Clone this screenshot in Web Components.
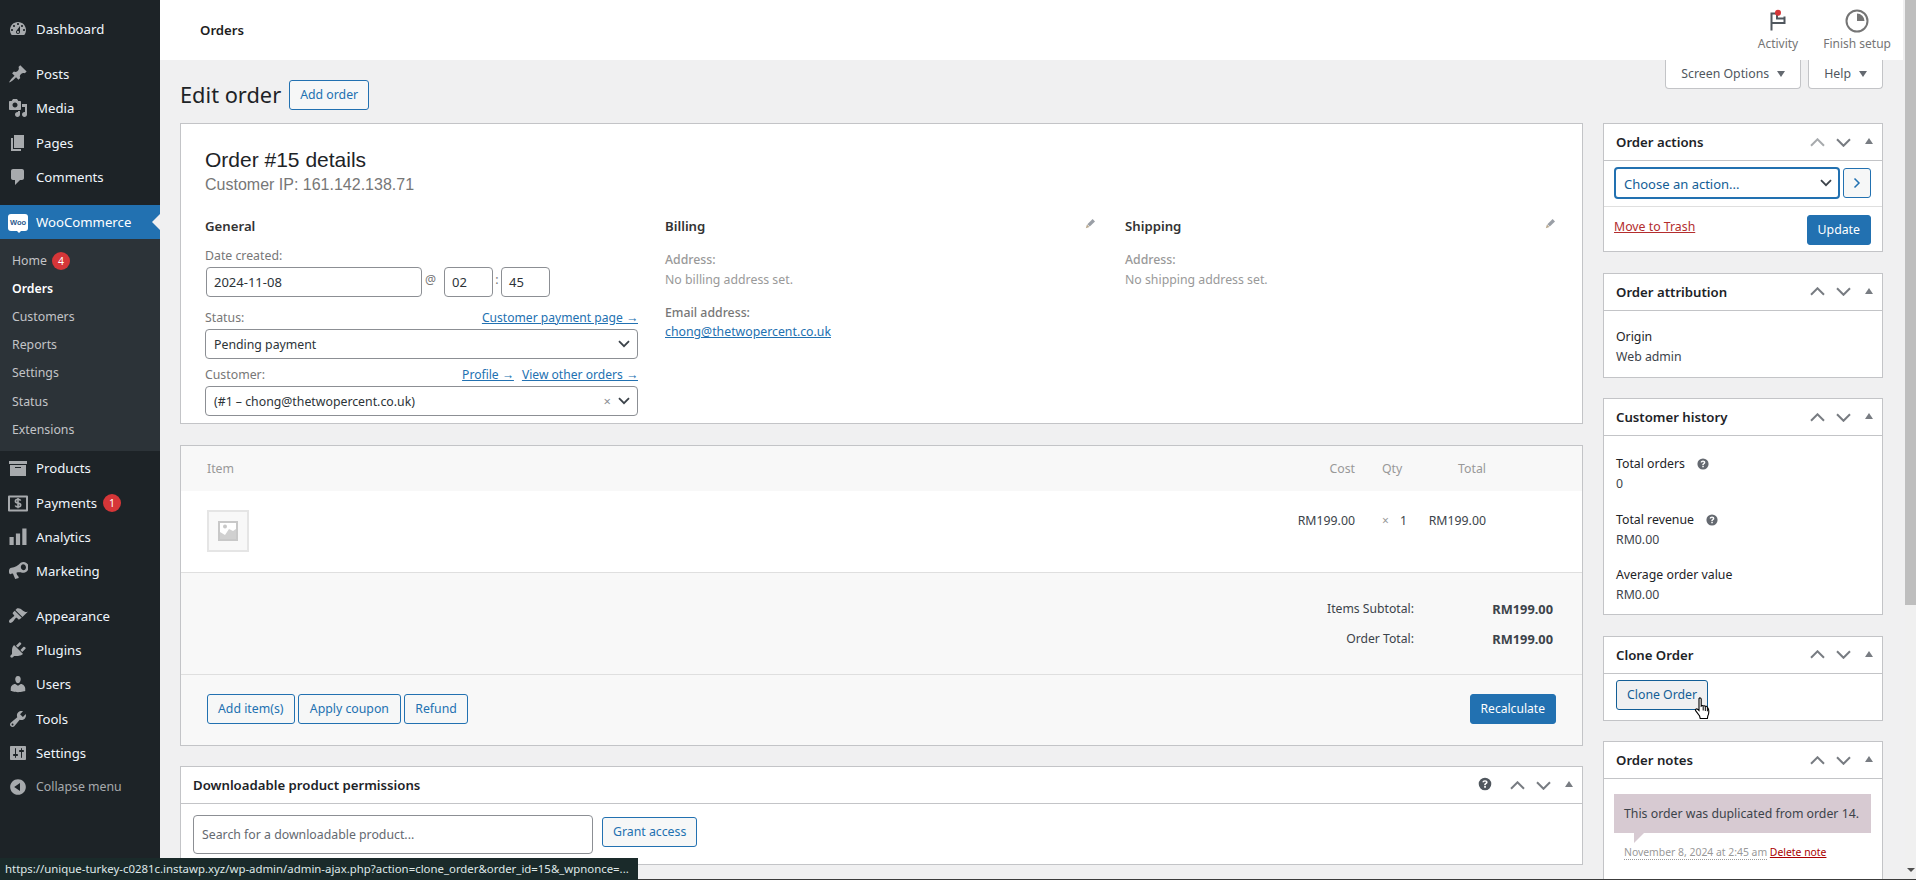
<!DOCTYPE html>
<html lang="en"><head><meta charset="utf-8"><title>Edit order</title>
<style>
html,body{margin:0;padding:0;height:880px;overflow:hidden;background:#f0f0f1}
body{font-family:"Noto Sans","Open Sans",sans-serif;font-size:12.3px;color:#3c434a;line-height:20px;position:relative}
wp-shell{display:flex;width:1916px;height:880px}
</style></head><body>
<wp-shell>
  <wp-menu></wp-menu>
  <wp-main>
    <wc-header slot="header"></wc-header>
    <title-row></title-row>
    <wp-columns>
      <div slot="main">
        <order-data></order-data>
        <order-items></order-items>
        <meta-box heading="Downloadable product permissions" help>
          <download-form></download-form>
        </meta-box>
      </div>
      <div slot="side">
        <meta-box heading="Order actions" dim-up><order-actions></order-actions></meta-box>
        <meta-box heading="Order attribution"><order-attribution></order-attribution></meta-box>
        <meta-box heading="Customer history"><customer-history></customer-history></meta-box>
        <meta-box heading="Clone Order"><clone-order></clone-order></meta-box>
        <meta-box heading="Order notes"><order-notes></order-notes></meta-box>
      </div>
    </wp-columns>
  </wp-main>
  <fake-scrollbar></fake-scrollbar>
</wp-shell>
<status-bubble></status-bubble>
<script>
const ICONS={
dashboard:'<path fill-rule="evenodd" d="M3.76 16h12.48c1.1-1.37 1.76-3.11 1.76-5 0-4.42-3.58-8-8-8s-8 3.58-8 8c0 1.89.66 3.63 1.76 5zM10 4c.55 0 1 .45 1 1s-.45 1-1 1-1-.45-1-1 .45-1 1-1zM6 6c.55 0 1 .45 1 1s-.45 1-1 1-1-.45-1-1 .45-1 1-1zm8 0c.55 0 1 .45 1 1s-.45 1-1 1-1-.45-1-1 .45-1 1-1zm-5.37 5.55L12 7v6c0 1.1-.9 2-2 2s-2-.9-2-2c0-.57.24-1.08.63-1.45zM4 10c.55 0 1 .45 1 1s-.45 1-1 1-1-.45-1-1 .45-1 1-1zm12 0c.55 0 1 .45 1 1s-.45 1-1 1-1-.45-1-1 .45-1 1-1zm-5 3c0-.55-.45-1-1-1s-1 .45-1 1 .45 1 1 1 1-.45 1-1z"/>',
post:'<path d="M10.44 3.02l1.82-1.82 6.36 6.35-1.83 1.82c-1.05-.68-2.48-.57-3.41.36l-.75.75c-.92.93-1.04 2.35-.35 3.41l-1.83 1.82-2.41-2.41-2.8 2.79c-.42.42-3.38 2.71-3.8 2.29s1.86-3.39 2.28-3.81l2.79-2.79L4.1 9.36l1.83-1.82c1.05.69 2.48.57 3.4-.36l.75-.75c.93-.92 1.05-2.35.36-3.41z"/>',
media:'<path fill-rule="evenodd" d="M13 11V4c0-.55-.45-1-1-1h-1.67L9 1H5L3.67 3H2c-.55 0-1 .45-1 1v7c0 .55.45 1 1 1h10c.55 0 1-.45 1-1zM7 4.5c1.38 0 2.5 1.12 2.5 2.5S8.38 9.5 7 9.5 4.5 8.38 4.5 7 5.62 4.5 7 4.5zM14 6h5v10.5c0 1.38-1.12 2.5-2.5 2.5S14 17.88 14 16.5s1.12-2.5 2.5-2.5c.17 0 .34.02.5.05V9h-3V6zm-4 8.05V13h2v3.5c0 1.38-1.12 2.5-2.5 2.5S7 17.88 7 16.5 8.12 14 9.5 14c.17 0 .34.02.5.05z"/>',
page:'<path d="M6 15V2h10v13H6zm-1 1h8v2H3V5h2v11z"/>',
comments:'<path d="M5 2h9c1.1 0 2 .9 2 2v7c0 1.1-.9 2-2 2h-2l-5 5v-5H5c-1.1 0-2-.9-2-2V4c0-1.1.9-2 2-2z"/>',
products:'<path fill-rule="evenodd" d="M19 3v3H1V3h18zM2 7h16v11H2V7zm11 3V9H7v1h6z"/>',
payments:'<path fill-rule="evenodd" d="M1 2.5h18a1 1 0 0 1 1 1v14a1 1 0 0 1-1 1H1a1 1 0 0 1-1-1v-14a1 1 0 0 1 1-1zm1 2v12h16v-12H2z"/><path fill="none" stroke="currentColor" stroke-width="1.6" d="M12.6 7.6c-.3-.8-1.2-1.3-2.6-1.3-1.5 0-2.6.7-2.6 1.9 0 2.6 5.3 1.2 5.3 3.8 0 1.2-1.2 1.9-2.7 1.9-1.4 0-2.4-.6-2.7-1.5M10 4.9v10.3"/>',
analytics:'<path d="M1.5 10h4.2v8H1.5zM7.9 6.5h4.2V18H7.9zM14.3 1.5h4.2V18h-4.2z"/>',
marketing:'<path fill-rule="evenodd" d="M12.7 1.8a5.3 5.3 0 1 1 4.3 9.6c-1 .4-2 .5-3 .3-1.8-.5-3.8-.5-5.6 0l.7 2.2c.2.5.7.8 1.100 1l.6 2.100-3.600 1.100-2.300-5.500-1.700.2C2.100 13.900 1 12.500 1 11V9.800C1 8.200 2 7 3.500 6.800c3.400-.5 6.400-2 9.200-5zM14.500 3.400c-1.300.4-2 2-1.500 3.600s2 2.500 3.300 2.100 2-2 1.500-3.600-2-2.500-3.300-2.100z"/>',
appearance:'<path d="M14.48 11.06L7.41 3.99l1.5-1.5c.5-.56 2.3-.47 3.51.32 1.21.8 1.43 1.28 2.91 2.1 1.18.64 2.45 1.26 4.45.85zm-.71.71L6.7 4.7 4.93 6.47c-.39.39-.39 1.02 0 1.41l1.06 1.06c.39.39.39 1.03 0 1.42-.6.6-1.43 1.11-2.21 1.69-.35.26-.7.53-1.01.84C1.43 13.23.5 15.1 1.24 16.33c.73 1.23 2.61.3 3.95-1.03.31-.31.58-.66.84-1.01.58-.78 1.09-1.61 1.69-2.21.39-.39 1.03-.39 1.42 0l1.06 1.06c.39.39 1.02.39 1.41 0z"/>',
plugins:'<path d="M13.11 4.36L9.87 7.6 8 5.73l3.24-3.24c.35-.34 1.05-.2 1.56.32.52.51.66 1.21.31 1.55zm-8 1.77l.91-1.12 9.01 9.01-1.19.84c-.71.71-2.63 1.16-3.82 1.16H6.14L4.9 17.26c-.59.59-1.54.59-2.12 0-.59-.58-.59-1.53 0-2.12l1.24-1.24v-3.88c0-1.13.4-3.19 1.09-3.89zm7.26 3.97l3.24-3.24c.34-.35 1.04-.21 1.55.31.52.51.66 1.21.31 1.55l-3.24 3.25z"/>',
users:'<path d="M10 9.25c-2.27 0-2.73-3.44-2.73-3.44C7 4.02 7.82 2 9.97 2c2.16 0 2.98 2.02 2.71 3.81 0 0-.41 3.44-2.68 3.44zm0 2.57L12.72 10c2.39 0 4.52 2.33 4.52 4.53v2.49s-3.65 1.13-7.24 1.13c-3.65 0-7.24-1.13-7.24-1.13v-2.49c0-2.25 1.94-4.48 4.47-4.48z"/>',
tools:'<path fill-rule="evenodd" d="M16.68 9.77c-1.34 1.34-3.3 1.67-4.95.99l-5.41 6.52c-.99.99-2.59.99-3.58 0s-.99-2.59 0-3.57l6.52-5.42c-.68-1.65-.35-3.61.99-4.95 1.28-1.28 3.12-1.62 4.72-1.06l-2.89 2.89 2.82 2.82 2.86-2.87c.53 1.58.18 3.39-1.08 4.65zM3.81 16.21c.4.39 1.04.39 1.43 0 .4-.4.4-1.04 0-1.43-.39-.4-1.03-.4-1.43 0-.39.39-.39 1.03 0 1.43z"/>',
settings:'<path fill-rule="evenodd" d="M18 16V4c0-.55-.45-1-1-1H3c-.55 0-1 .45-1 1v12c0 .55.45 1 1 1h14c.55 0 1-.45 1-1zM8 11h1c.55 0 1 .45 1 1s-.45 1-1 1H8v1.500c0 .28-.22.5-.5.5s-.5-.22-.5-.5V13H6c-.55 0-1-.45-1-1s.45-1 1-1h1V5.500c0-.28.22-.5.5-.5s.5.22.5.5V11zm5-2h-1c-.55 0-1-.45-1-1s.45-1 1-1h1V5.500c0-.28.22-.5.5-.5s.5.22.5.5V7h1c.55 0 1 .45 1 1s-.45 1-1 1h-1v5.500c0 .28-.22.5-.5.5s-.5-.22-.5-.5V9z"/>',
collapse:'<path fill-rule="evenodd" d="M10 2.160c4.330 0 7.840 3.510 7.840 7.840s-3.510 7.840-7.840 7.840S2.160 14.330 2.160 10 5.710 2.160 10 2.160zm2 11.720V6.120L6.180 9.970z"/>',
help:'<path fill-rule="evenodd" d="M10 3a7 7 0 1 1 0 14 7 7 0 0 1 0-14zm-.9 9.300v1.900h1.900v-1.900H9.100zM10 5.700c-1.600 0-2.800.9-2.900 2.400h1.800c.1-.6.500-.9 1.100-.9s1 .3 1 .9c0 .5-.3.800-.9 1.200-.8.500-1 1-1 2.100h1.800c0-.6.100-.9.800-1.300.8-.5 1.200-1.100 1.200-2 0-1.500-1.200-2.400-2.900-2.400z"/>'
};
class Base extends HTMLElement{
  connectedCallback(){
    if(this.shadowRoot)return;
    const r=this.attachShadow({mode:'open'});
    r.innerHTML='<style>'+this.constructor.css+'</style>'+this.html();
  }
  html(){return '<slot></slot>'}
}
const ico=(n,s=20)=>`<svg width="${s}" height="${s}" viewBox="0 0 20 20" fill="currentColor" aria-hidden="true">${ICONS[n]}</svg>`;
const chev=(c='#3c434a')=>`<svg width="12" height="8" viewBox="0 0 12 8" aria-hidden="true"><path d="M1 1.200l5 5 5-5" fill="none" stroke="${c}" stroke-width="1.800"/></svg>`;
const pencil=`<svg width="14" height="14" viewBox="0 0 14 14" aria-hidden="true"><path d="M4.600 9.400l5.200-5.200" stroke="#9a9fa6" stroke-width="3.400" fill="none"/><path d="M1.800 12.200l1.200-3.600 2.400 2.400z" fill="#b9a98f"/></svg>`;

class WpShell extends Base{static css=':host{display:flex}'}
class WpMenu extends Base{
  static css=`:host{display:block;width:160px;flex:none;background:#1d2327;height:880px;padding-top:11.6px;box-sizing:border-box;color:#f0f6fc;font-size:13.2px}
  .i{display:flex;align-items:center;height:34.33px;padding-left:8px;gap:8px;position:relative}
  .i svg{color:#a7aaad;flex:none}
  .sep{height:11px}
  .sep.s2{height:10px}
  .cur{background:#2271b1;height:34px;color:#fff}
  .cur:after{content:"";position:absolute;right:0;top:9px;border:8px solid transparent;border-right-color:#f0f0f1;border-left:0}
  .woo{width:20px;height:17px;background:#fff;border-radius:3px;color:#2c5a8c;font:700 7.500px/17px "Liberation Sans",sans-serif;text-align:center;position:relative;flex:none}
  .woo:after{content:"";position:absolute;left:9px;bottom:-2px;border:2px solid transparent;border-top-color:#fff;border-bottom:0}
  .sub{background:#2c3338;padding:7.600px 0 7.400px;font-size:12.3px}
  .sub div{height:28.17px;line-height:28.17px;padding-left:12px;color:#c3c4c7;display:flex;align-items:center;gap:5px}
  .sub .on{color:#fff;font-weight:600}
  .b{display:inline-block;width:18px;height:18px;border-radius:50%;background:#d63638;color:#fff;font-size:10.500px;line-height:18px;text-align:center}
  .muted{color:#a7aaad;font-size:12.3px}`;
  html(){
    const it=(n,t,x='')=>`<div class="i">${ico(n)}<span>${t}</span>${x}</div>`;
    return it('dashboard','Dashboard')+'<div class="sep"></div>'+it('post','Posts')+it('media','Media')+it('page','Pages')+it('comments','Comments')+'<div class="sep"></div>'
    +'<div class="i cur"><span class="woo">Woo</span><span>WooCommerce</span></div>'
    +'<div class="sub"><div>Home <span class="b">4</span></div><div class="on">Orders</div><div>Customers</div><div>Reports</div><div>Settings</div><div>Status</div><div>Extensions</div></div>'
    +it('products','Products')+it('payments','Payments','<span class="b" style="margin-left:-2px">1</span>')+it('analytics','Analytics')+it('marketing','Marketing')+'<div class="sep s2"></div>'
    +it('appearance','Appearance')+it('plugins','Plugins')+it('users','Users')+it('tools','Tools')+it('settings','Settings')
    +`<div class="i">${ico('collapse')}<span class="muted">Collapse menu</span></div>`;
  }
}
class WpMain extends Base{
  static css=`:host{display:block;flex:1;min-width:0;height:880px;overflow:hidden}
  .c{padding:0 22px 0 20px}`;
  html(){return '<slot name="header"></slot><div class="c"><slot></slot></div>'}
}
class WcHeader extends Base{
  static css=`:host{display:flex;align-items:stretch;justify-content:space-between;height:60px;background:#fff;margin-right:2px;padding:0 12px 0 40px;box-sizing:border-box}
  h1{margin:0;font:600 13.2px/60px "Noto Sans",sans-serif;color:#1e1e1e}
  .r{display:flex;gap:25px}
  .a{display:flex;flex-direction:column;align-items:center;color:#757575;font-size:12px;line-height:19px;padding-top:8px}
  svg{display:block;height:26px}`;
  html(){return `<h1>Orders</h1><div class="r">
  <div class="a"><svg width="26" height="26" viewBox="0 0 26 26"><path d="M6.500 22.500V5.500H12V10.500h7.500M19.500 8.500v6.500H6.500" fill="none" stroke="#50575e" stroke-width="2"/><circle cx="13" cy="4.700" r="3" fill="#d63638"/></svg><span>Activity</span></div>
  <div class="a"><svg width="26" height="26" viewBox="0 0 26 26"><circle cx="13" cy="13" r="10.500" fill="none" stroke="#757575" stroke-width="2"/><path d="M13 5.500a7.500 7.500 0 0 1 7.500 7.500H13z" fill="#757575"/></svg><span>Finish setup</span></div></div>`}
}
class TitleRow extends Base{
  static css=`:host{display:flex;justify-content:space-between;align-items:flex-start;height:63px}
  .l{display:flex;align-items:center;gap:8px;padding-top:20px}
  h1{margin:0;font:400 21.800px/30px "Noto Sans",sans-serif;color:#1d2327}
  .r{display:flex;gap:7px}
  .t{display:flex;align-items:center;gap:8px;height:28px;border:1px solid #c3c4c7;border-top:0;border-radius:0 0 4px 4px;background:#fff;padding:0 15px;color:#50575e;line-height:26px}
  .t:after{content:"";border:4.5px solid transparent;border-top:6px solid #646970;border-bottom:0}`;
  html(){return `<div class="l"><h1>Edit order</h1><wp-btn>Add order</wp-btn></div><div class="r"><div class="t">Screen Options</div><div class="t">Help</div></div>`}
}
class WpBtn extends Base{
  static css=`:host{display:inline-flex;align-items:center;justify-content:center;height:30px;box-sizing:border-box;border:1px solid #2271b1;border-radius:3px;background:#f6f7f7;color:#2271b1;padding:0 10px;white-space:nowrap;font-size:12.3px}
  :host([primary]){background:#2271b1;color:#fff}
  :host([hov]){border-color:#135e96;color:#135e96;background:#f0f0f1}`;
}
class WpColumns extends Base{
  static css=`:host{display:grid;grid-template-columns:1fr 280px;gap:20px}
  ::slotted(div){display:flex;flex-direction:column;gap:20.600px}`;
  html(){return '<slot name="main"></slot><slot name="side"></slot>'}
}
class MetaBox extends Base{
  static css=`:host{display:block;background:#fff;border:1px solid #c3c4c7;position:relative}
  header{display:flex;align-items:center;height:36px;border-bottom:1px solid #c3c4c7;padding-left:12px}
  h2{flex:1;margin:0;font:600 13.2px/36px "Noto Sans",sans-serif;color:#1d2327}
  .b{width:26px;height:36px;display:flex;align-items:center;justify-content:center;flex:none}
  .tri{border:4px solid transparent;border-bottom:6px solid #787c82;border-top:0;margin-bottom:2px}
  .h{color:#50575e;display:flex;margin-right:10px;margin-top:-3px}`;
  html(){
    const up=this.hasAttribute('dim-up')?'#a7aaad':'#787c82';
    const ch=(c,d)=>`<div class="b"><svg width="15" height="9" viewBox="0 0 15 9"><path d="${d}" fill="none" stroke="${c}" stroke-width="2"/></svg></div>`;
    return `<header><h2>${this.getAttribute('heading')}</h2>${this.hasAttribute('help')?`<span class="h">${ico('help',18)}</span>`:''}${ch(up,'M1 7.800l6.500-6.500 6.500 6.500')}${ch('#787c82','M1 1.300l6.500 6.500 6.500-6.500')}<div class="b"><div class="tri"></div></div></header><slot></slot>`;
  }
}
class SelBox extends Base{
  static css=`:host{display:flex;align-items:center;height:30px;box-sizing:border-box;border:1px solid #8c8f94;border-radius:4px;background:#fff;padding:0 7px 0 8px;color:#2c3338;justify-content:space-between}
  :host([focus]){border:2px solid #2271b1;padding:0 6px 0 8px;color:#135e96;font-size:13px}
  .x{color:#8c8f94;font-size:13px;margin-right:7px}
  .r{display:flex;align-items:center}
  span.t{white-space:nowrap;padding-top:1px}`;
  html(){return `<span class="t"><slot></slot></span><span class="r">${this.hasAttribute('clear')?'<span class="x">×</span>':''}${chev()}</span>`}
}
class OrderData extends Base{
  static css=`:host{display:block;background:#fff;border:1px solid #c3c4c7;padding:23px 24px 4px}
  h2{margin:0;font:400 21px/26px "Liberation Sans",sans-serif;color:#1d2327}
  .ip{font:400 16px/22px "Liberation Sans",sans-serif;color:#777;margin-bottom:18px;padding-top:1px}
  .cols{display:grid;grid-template-columns:repeat(3,433px);gap:27px}
  h3{margin:0;font:600 13.2px/24px "Noto Sans",sans-serif;color:#333;display:flex;justify-content:space-between}
  h3 span{display:flex;margin-top:1.500px}
  label{display:flex;justify-content:space-between;color:#777;line-height:23px;padding-top:1px}
  .first{margin-top:5px}
  a{color:#2271b1;text-decoration:underline;font-size:12.100px}
  .lnk{display:flex;gap:8px}
  .date{display:flex;align-items:center;padding-left:1px;margin-bottom:8px}
  .in{height:30px;box-sizing:border-box;border:1px solid #8c8f94;border-radius:4px;padding:0 7px;line-height:28px;color:#2c3338;background:#fff;font-size:13px}
  .sepc{color:#777;box-sizing:border-box;margin-top:-4px}
  sel-box{margin-bottom:3px;font-size:12.300px}
  dl{margin:12px 0 0;line-height:19.500px;color:#999}
  dt{font-weight:500}dd{margin:0 0 13.500px}
  .em{color:#777}`;
  html(){
    const add=(t,x='')=>`<dl><dt>Address:</dt><dd>${t}</dd>${x}</dl>`;
    return `<h2>Order #15 details</h2><div class="ip">Customer IP: 161.142.138.71</div><div class="cols">
    <div><h3>General</h3>
      <label class="first">Date created:</label>
      <div class="date"><div class="in" style="width:216px">2024-11-08</div><span class="sepc" style="width:22px;padding-left:3px">@</span><div class="in" style="width:49px">02</div><span class="sepc" style="width:8px;text-align:center">:</span><div class="in" style="width:49px">45</div></div>
      <label>Status:<a href="#">Customer payment page →</a></label>
      <sel-box>Pending payment</sel-box>
      <label>Customer:<span class="lnk"><a href="#">Profile →</a><a href="#">View other orders →</a></span></label>
      <sel-box clear>(#1 – chong@thetwopercent.co.uk)</sel-box>
    </div>
    <div><h3>Billing<span>${pencil}</span></h3>${add('No billing address set.','<dt class="em">Email address:</dt><dd><a href="#" style="font-size:12.300px">chong@thetwopercent.co.uk</a></dd>')}</div>
    <div><h3>Shipping<span>${pencil}</span></h3>${add('No shipping address set.')}</div>
    </div>`;
  }
}
class OrderItems extends Base{
  static css=`:host{display:block;background:#f8f8f8;border:1px solid #c3c4c7}
  .g{display:grid;grid-template-columns:1fr 100px 47px 84px;padding:0 96px 0 26px}
  .head{height:45px;line-height:45px;color:#999}
  .row{background:#fff;padding-top:19px;padding-bottom:20px;border-bottom:1px solid #dfdfdf}
  .row .r,.row .q{padding-top:1px}
  .r{text-align:right}
  .q{padding-left:27px;white-space:nowrap}
  .q i{font-style:normal;color:#999;font-size:12px;margin-right:8px}
  .th{width:42px;height:42px;box-sizing:border-box;border:2px solid #e5e5e5;background:#f8f8f8;display:flex;align-items:center;justify-content:center}
  .tot{display:grid;grid-template-columns:auto 139px;justify-content:end;row-gap:10px;padding:26px 29px 25px 0;border-bottom:1px solid #dfdfdf}
  .tot b{text-align:right;font-weight:700;color:#3c434a;font-size:12.800px}
  .lab{text-align:right;color:#3c434a;font-size:12.200px}
  .act{display:flex;gap:3px;padding:19px 26px 20px;height:31px}
  .sp{flex:1}`;
  html(){return `<div class="g head"><div>Item</div><div class="r">Cost</div><div class="q">Qty</div><div class="r">Total</div></div>
  <div class="g row"><div><div class="th"><svg width="20" height="20" viewBox="0 0 20 20"><rect x="1" y="1" width="18" height="18" fill="#fff" stroke="#c8c8c8" stroke-width="2"/><circle cx="7" cy="5.500" r="2" fill="#c8c8c8"/><path d="M2 18v-7l5 3 4-6 4 2 3-2v10z" fill="#d0d0d0"/></svg></div></div><div class="r">RM199.00</div><div class="q"><i>×</i> 1</div><div class="r">RM199.00</div></div>
  <div class="tot"><div class="lab">Items Subtotal:</div><b>RM199.00</b><div class="lab">Order Total:</div><b>RM199.00</b></div>
  <div class="act"><wp-btn>Add item(s)</wp-btn><wp-btn style="padding:0 11.300px">Apply coupon</wp-btn><wp-btn>Refund</wp-btn><span class="sp"></span><wp-btn primary style="font-size:12.100px">Recalculate</wp-btn></div>`}
}
class DownloadForm extends Base{
  static css=`:host{display:flex;align-items:flex-start;gap:9px;padding:11px 12px 10px}
  .s{width:400px;height:39px;box-sizing:border-box;border:1px solid #8c8f94;border-radius:4px;padding:0 8px;line-height:37px;color:#646970;background:#fff}
  wp-btn{margin-top:2px}`;
  html(){return '<div class="s">Search for a downloadable product...</div><wp-btn>Grant access</wp-btn>'}
}
class OrderActions extends Base{
  static css=`:host{display:block}
  .a{display:flex;gap:3px;padding:6px 11px 7px 10px;border-bottom:1px solid #dfdfdf;align-items:flex-start}
  sel-box{flex:1;height:32px}
  .a wp-btn{width:28px;padding:0;height:30px;margin-top:1px;flex:none}
  .b{display:flex;justify-content:space-between;align-items:flex-start;padding:8px 11px 6px 10px}
  a{color:#b32d2e;line-height:24px}`;
  html(){return `<div class="a"><sel-box focus>Choose an action...</sel-box><wp-btn><svg width="8" height="12" viewBox="0 0 8 12"><path d="M1.500 1.500l4.500 4.500-4.500 4.500" fill="none" stroke="#2271b1" stroke-width="1.500"/></svg></wp-btn></div><div class="b"><a href="#">Move to Trash</a><wp-btn primary>Update</wp-btn></div>`}
}
class OrderAttribution extends Base{
  static css=`:host{display:block;padding:16px 12px 10px;line-height:20px}div{color:#1d2327}`;
  html(){return '<div>Origin</div>Web admin'}
}
class CustomerHistory extends Base{
  static css=`:host{display:block;padding:17.500px 12px 9.500px;line-height:20px}
  .l{color:#1d2327;display:flex;align-items:center;gap:10px}
  .l svg{color:#646970}
  .v{margin-bottom:16px}.v:last-child{margin-bottom:0}`;
  html(){return `<div class="l">Total orders ${ico('help',16)}</div><div class="v">0</div><div class="l">Total revenue ${ico('help',16)}</div><div class="v" style="margin-bottom:15px">RM0.00</div><div class="l">Average order value</div><div class="v">RM0.00</div>`}
}
class CloneOrder extends Base{
  static css=`:host{display:block;padding:6px 12px 10px;position:relative}
  svg{position:absolute;left:90px;top:23px}`;
  html(){return `<wp-btn hov>Clone Order</wp-btn><svg width="18" height="23" viewBox="0 0 18 23"><path d="M5 1.500c.8-1 2-.6 2.200.5v7c.6-.6 1.500-.5 2 .1.600-.5 1.500-.4 2 .3.700-.4 1.600-.2 2 .6l1 1.500c.6 1 .6 2 .6 3.200 0 1.600-.3 3-1 4.300l-.4 2.500H6.200l-.6-2.500-4-5.300c-.8-1.200.8-2.400 1.900-1.500L5 13.500z" fill="#fff" stroke="#000" stroke-width="1.100"/><path d="M9.200 9.500v4M11.300 10v4M13.400 10.800v3.500" stroke="#000" stroke-width="1" fill="none"/></svg>`}
}
class OrderNotes extends Base{
  static css=`:host{display:block;padding:15px 11px 20px 10px}
  .n{background:#d7cad2;padding:10px;height:19px;line-height:19px;position:relative;color:#3c434a;white-space:nowrap}
  .n:after{content:"";position:absolute;left:20px;top:39px;border-style:solid;border-width:10px 10px 0 0;border-color:#d7cad2 transparent transparent transparent}
  .m{padding:9px 10px;color:#999;font-size:10.400px;line-height:20px;white-space:nowrap}
  .d{border-bottom:1px dotted #999}
  a{color:#a00}`;
  html(){return `<div class="n">This order was duplicated from order 14.</div><div class="m"><span class="d">November 8, 2024 at 2:45 am</span> <a href="#">Delete note</a></div>`}
}
class FakeScrollbar extends Base{
  static css=`:host{display:block;width:11px;flex:none;height:880px;background:#f0f0f0;position:relative}
  .t{height:605px;background:#bebebe}
  .a{position:absolute;left:2px;bottom:8px;border:4px solid transparent;border-top:4px solid #505050;border-bottom:0}`;
  html(){return '<div class="t"></div><div class="a"></div>'}
}
class StatusBubble extends Base{
  static css=`:host{position:absolute;left:0;bottom:0;width:100%;height:22px;pointer-events:none}
  .s{position:absolute;left:0;top:0;width:638px;height:22px;box-sizing:border-box;background:#1a2a2a;color:#dfe8e8;font-size:11.400px;line-height:22px;padding-left:5px;white-space:nowrap;overflow:hidden}
  .l{position:absolute;left:0;right:0;bottom:0;height:1px;background:#3c3c3c}`;
  html(){return '<div class="l"></div><div class="s">https://unique-turkey-c0281c.instawp.xyz/wp-admin/admin-ajax.php?action=clone_order&amp;order_id=15&amp;_wpnonce=...</div>'}
}
const defs={'wp-btn':WpBtn,'sel-box':SelBox,'meta-box':MetaBox,'order-data':OrderData,'order-items':OrderItems,'download-form':DownloadForm,'order-actions':OrderActions,'order-attribution':OrderAttribution,'customer-history':CustomerHistory,'clone-order':CloneOrder,'order-notes':OrderNotes,'wc-header':WcHeader,'title-row':TitleRow,'wp-columns':WpColumns,'wp-menu':WpMenu,'wp-main':WpMain,'fake-scrollbar':FakeScrollbar,'status-bubble':StatusBubble,'wp-shell':WpShell};
for(const k in defs)customElements.define(k,defs[k]);
</script>
</body></html>
